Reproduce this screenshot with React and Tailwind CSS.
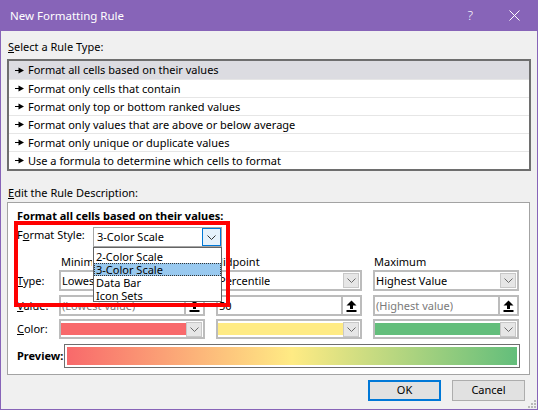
import React from 'react';

const ruleTypes = [
  'Format all cells based on their values',
  'Format only cells that contain',
  'Format only top or bottom ranked values',
  'Format only values that are above or below average',
  'Format only unique or duplicate values',
  'Use a formula to determine which cells to format',
];

function Chevron({ color = '#6a6a6a' }) {
  return (
    <svg width="9" height="5" viewBox="0 0 9 5">
      <path d="M0.5 0.5 L4.5 4.5 L8.5 0.5" fill="none" stroke={color} strokeWidth="1" />
    </svg>
  );
}

function RuleArrow() {
  return (
    <svg width="9" height="7" viewBox="0 0 9 7" className="shrink-0">
      <rect x="0" y="3" width="4" height="1" fill="#000" />
      <polygon points="3.5,0.5 9,3.5 3.5,6.5" fill="#000" />
    </svg>
  );
}

function UploadIcon() {
  return (
    <svg width="11" height="12" viewBox="0 0 11 12">
      <polygon points="5.5,0.5 10.5,5.5 0.5,5.5" fill="#000" />
      <rect x="4" y="5" width="3" height="4" fill="#000" />
      <rect x="0.5" y="10" width="10" height="2" fill="#000" />
    </svg>
  );
}

function DropBtn() {
  return (
    <div className="ml-auto mr-px flex h-[15px] w-[16px] shrink-0 items-center justify-center border border-[#c8c8c8] bg-[#e6e6e6]">
      <Chevron />
    </div>
  );
}

// clip: the open style list covers the rest of this text
function TypeBox({ text, clip }) {
  return (
    <div className="flex h-[21px] w-[146px] items-center border-2 border-[#bcbcbc] bg-white pl-[1px]">
      <span className={clip ? 'w-[31px] overflow-hidden whitespace-nowrap text-[11px] leading-[15px]' : 'truncate text-[11px] leading-[15px]'}>
        {text}
      </span>
      <DropBtn />
    </div>
  );
}

function ValueBox({ text, placeholder }) {
  return (
    <div className="flex h-[21px] w-[146px] items-center border-2 border-[#bcbcbc] bg-white pl-[1px]">
      <span className={placeholder ? 'truncate text-[11px] leading-[15px] text-[#7a7a7a]' : 'truncate text-[11px] leading-[15px] text-black'}>
        {text}
      </span>
      <div className="ml-auto flex h-full w-[19px] items-center justify-center border-l-2 border-[#bcbcbc] bg-white">
        <UploadIcon />
      </div>
    </div>
  );
}

function ColorBox({ color }) {
  return (
    <div className="flex h-[20px] w-[146px] items-center border-2 border-[#bcbcbc] bg-white">
      <div className={`h-[12px] flex-1 ${color}`} />
      <DropBtn />
    </div>
  );
}

export default function App() {
  return (
    <div className="relative flex h-[410px] w-[538px] flex-col border-x border-b border-[#8764b8] bg-[#f0f0f0] font-['Noto_Sans',sans-serif] text-[11px] text-black">
      {/* title bar */}
      <div className="flex h-[31px] shrink-0 items-center bg-[#8764b8] pl-[9px] text-white">
        <span className="text-[11.5px]">New Formatting Rule</span>
        <span className="ml-auto mr-[36px] text-[13px] font-light">?</span>
        <svg width="11" height="11" viewBox="0 0 11 11" className="mr-[17px]">
          <path d="M0.5 0.5 L10.5 10.5 M10.5 0.5 L0.5 10.5" stroke="#fff" strokeWidth="1" />
        </svg>
      </div>

      <div className="flex flex-col px-[6px]">
        <div className="mt-[8px] h-[16px] pl-[1px] leading-[16px]">
          <span className="underline">S</span>elect a Rule Type:
        </div>

        {/* rule type list */}
        <div className="mt-[4px] flex flex-col border-2 border-[#6e6e6e] bg-white">
          {ruleTypes.map((r, i) => (
            <div
              key={r}
              className={
                i === 0
                  ? 'flex h-[18px] items-center gap-[4px] bg-[#dcdce1] pl-[6px]'
                  : 'flex h-[18px] items-center gap-[4px] border-t border-[#e6e6e6] pl-[6px]'
              }
            >
              <RuleArrow />
              <span className="leading-[16px]">{r}</span>
            </div>
          ))}
        </div>

        <div className="mt-[14px] h-[16px] pl-[1px] leading-[16px]">
          <span className="underline">E</span>dit the Rule Description:
        </div>

        {/* description */}
        <div className="mr-px mt-px flex flex-col border border-[#a3a3a3] bg-white pb-[6px] pl-[9px] pt-[5px]">
          <div className="h-[16px] font-bold leading-[16px]">Format all cells based on their values:</div>

          <div className="mt-[3px] flex items-start">
            <div className="w-[76px] leading-[16px]">
              F<span className="underline">o</span>rmat Style:
            </div>
            <div className="flex h-[20px] w-[129px] items-center border border-[#a6a6a6] bg-white pl-[3px]">
              <span className="leading-[16px]">3-Color Scale</span>
              <div className="ml-auto flex h-[18px] w-[19px] items-center justify-center border border-[#0078d7] bg-[#e5f1fb]">
                <Chevron color="#333" />
              </div>
            </div>
          </div>

          <div className="mt-[7px] flex h-[16px] items-center leading-[16px]">
            <div className="w-[42px]" />
            <div className="flex gap-[11px]">
              <div className="w-[146px] pl-[2px]">
                <div className="w-[31px] overflow-hidden whitespace-nowrap">Minimum</div>
              </div>
              <div className="-ml-[3px] w-[149px]">Midpoint</div>
              <div className="w-[146px] pl-px">Maximum</div>
            </div>
          </div>

          <div className="flex items-center">
            <div className="w-[42px] leading-[16px]">
              <span className="underline">T</span>ype:
            </div>
            <div className="flex gap-[11px]">
              <TypeBox text="Lowest Value" clip />
              <TypeBox text="Percentile" />
              <TypeBox text="Highest Value" />
            </div>
          </div>

          <div className="mt-[4px] flex items-center">
            <div className="w-[42px] leading-[16px]">
              <span className="underline">V</span>alue:
            </div>
            <div className="flex gap-[11px]">
              <ValueBox text="(Lowest value)" placeholder />
              <ValueBox text="50" />
              <ValueBox text="(Highest value)" placeholder />
            </div>
          </div>

          <div className="mt-[3px] flex items-center">
            <div className="w-[42px] leading-[16px]">
              <span className="underline">C</span>olor:
            </div>
            <div className="flex gap-[11px]">
              <ColorBox color="bg-[#f8696b]" />
              <ColorBox color="bg-[#ffeb84]" />
              <ColorBox color="bg-[#63be7b]" />
            </div>
          </div>

          <div className="mt-[5px] flex items-center">
            <div className="w-[47px] font-bold leading-[16px]">Preview:</div>
            <div className="h-[24px] w-[456px] border border-[#6e6e6e] bg-white p-[2px]">
              <div className="h-full w-full bg-[linear-gradient(to_right,#f8696b,#ffeb84_50%,#63be7b)]" />
            </div>
          </div>
        </div>

        {/* buttons */}
        <div className="mt-[5px] flex justify-end gap-[11px] pr-[6px]">
          <div className="flex h-[21px] w-[73px] items-center justify-center border-2 border-[#0078d7] bg-[#e1e1e1]">OK</div>
          <div className="flex h-[21px] w-[73px] items-center justify-center border border-[#adadad] bg-[#e1e1e1]">Cancel</div>
        </div>
      </div>

      {/* resize grip */}
      <svg width="8" height="8" viewBox="0 0 8 8" className="absolute bottom-[1px] right-[1px]">
        <rect x="6" y="0" width="2" height="2" fill="#b8b8b8" />
        <rect x="3" y="3" width="2" height="2" fill="#b8b8b8" />
        <rect x="6" y="3" width="2" height="2" fill="#b8b8b8" />
        <rect x="0" y="6" width="2" height="2" fill="#b8b8b8" />
        <rect x="3" y="6" width="2" height="2" fill="#b8b8b8" />
        <rect x="6" y="6" width="2" height="2" fill="#b8b8b8" />
      </svg>

      {/* open dropdown list */}
      <div className="absolute left-[92px] top-[247px] flex h-[55px] w-[129px] flex-col border border-[#646464] bg-white pt-[2px]">
        <div className="h-[13px] pl-[2px] leading-[13px]">2-Color Scale</div>
        <div className="h-[13px] border border-dotted border-[#333] bg-[#99c9ef] pl-px leading-[11px]">3-Color Scale</div>
        <div className="h-[13px] pl-[2px] leading-[13px]">Data Bar</div>
        <div className="h-[13px] pl-[2px] leading-[13px]">Icon Sets</div>
      </div>

      {/* red highlight */}
      <div className="absolute left-[13px] top-[221px] h-[86px] w-[216px] border-4 border-[#ff0000]" />
    </div>
  );
}
